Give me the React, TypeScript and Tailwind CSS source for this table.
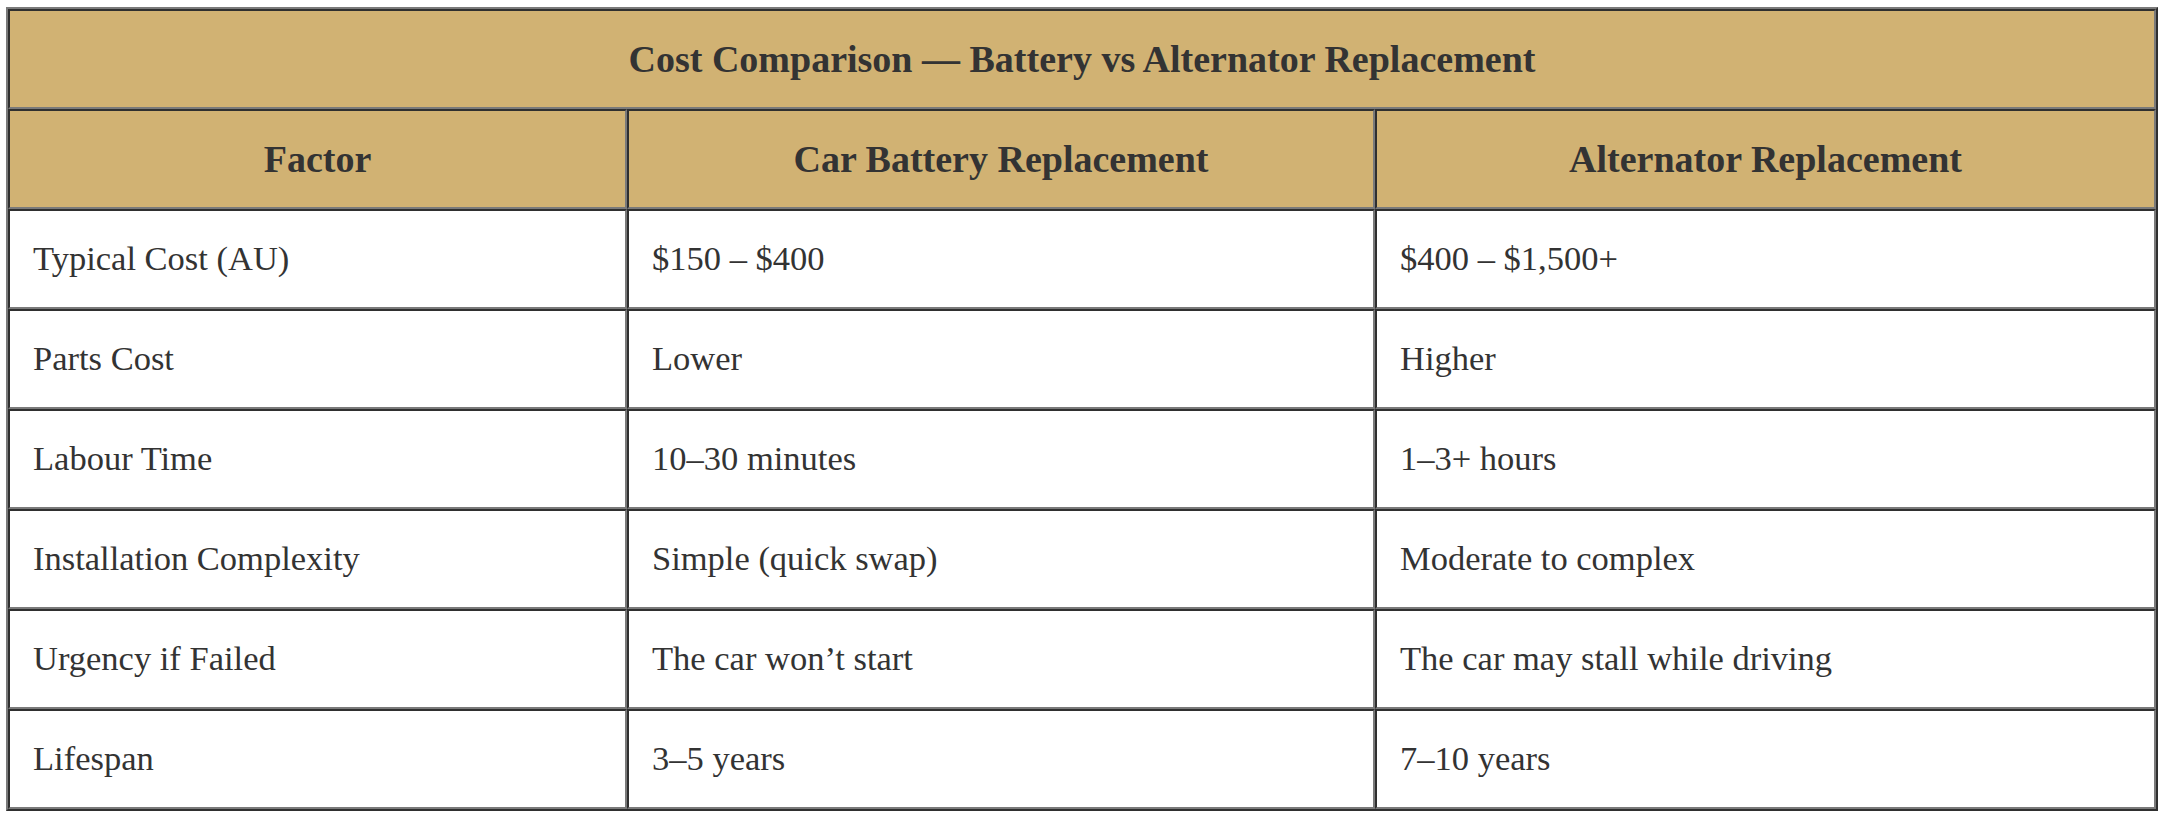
const rows = [
  ["Typical Cost (AU)", "$150 – $400", "$400 – $1,500+"],
  ["Parts Cost", "Lower", "Higher"],
  ["Labour Time", "10–30 minutes", "1–3+ hours"],
  ["Installation Complexity", "Simple (quick swap)", "Moderate to complex"],
  ["Urgency if Failed", "The car won’t start", "The car may stall while driving"],
  ["Lifespan", "3–5 years", "7–10 years"],
];

const cell =
  "h-[100px] border-2 border-t-[#2f2f2f] border-l-[#2f2f2f] border-b-[#7a7a7a] border-r-[#7a7a7a] flex items-center";

export default function App() {
  return (
    <div className="min-h-screen bg-white pt-[7px] px-[6px] font-['Liberation_Serif',serif] text-[#333]">
      <div className="w-full border-2 border-t-[#7a7a7a] border-l-[#7a7a7a] border-b-[#2f2f2f] border-r-[#2f2f2f]">
        <div className="grid grid-cols-[619px_748px_781px]">
          {/* title */}
          <div className={`${cell} col-span-3 justify-center bg-[#d1b273] text-[38px] font-bold`}>
            Cost Comparison — Battery vs Alternator Replacement
          </div>
          {["Factor", "Car Battery Replacement", "Alternator Replacement"].map((h) => (
            <div key={h} className={`${cell} justify-center bg-[#d1b273] text-[38px] font-bold`}>
              {h}
            </div>
          ))}
          {rows.map((r) =>
            r.map((c, i) => (
              <div key={r[0] + i} className={`${cell} bg-white px-[23px] text-[34.5px]`}>
                {c}
              </div>
            ))
          )}
        </div>
      </div>
    </div>
  );
}
